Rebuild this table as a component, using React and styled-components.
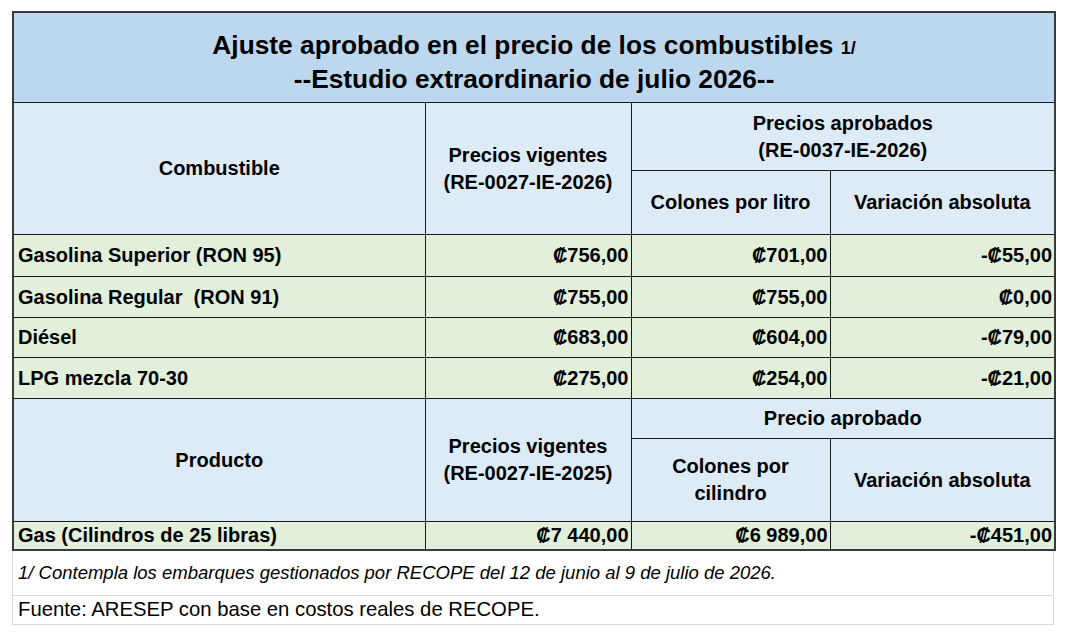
import React from "react";
import styled, { createGlobalStyle } from "styled-components";

const GlobalStyle = createGlobalStyle`
  html, body {
    margin: 0;
    padding: 0;
    background: #ffffff;
  }
  body {
    font-family: "Liberation Sans", Arial, sans-serif;
    color: #000000;
  }
`;

const Page = styled.div`
  padding: 11px 0 0 12px;
  width: 1042px;
`;

const Table = styled.table`
  width: 1042px;
  border-collapse: collapse;
  table-layout: fixed;
  border: 2px solid #3a3a3a;
`;

const TitleCell = styled.td`
  height: 80px;
  padding: 9px 0 0;
  background: #bdd7ee;
  border: 1px solid #1a1a1a;
  text-align: center;
  vertical-align: middle;
  font-size: 26.3px;
  font-weight: bold;
  line-height: 31px;
`;

const Note = styled.span`
  font-size: 18px;
`;

const HeadCell = styled.th`
  height: ${(p) => p.$h}px;
  padding: 0 4px;
  background: #ddebf7;
  border: 1px solid #1a1a1a;
  text-align: center;
  vertical-align: middle;
  font-size: 20px;
  font-weight: bold;
  line-height: 27px;
`;

const DataRow = styled.tr`
  height: ${(p) => p.$h}px;
`;

const LabelCell = styled.td`
  padding: 0 4px;
  background: #e2efda;
  border: 1px solid #1a1a1a;
  text-align: left;
  vertical-align: middle;
  font-size: 20px;
  font-weight: bold;
  white-space: pre;
`;

const NumCell = styled(LabelCell)`
  padding: 0 2px 0 4px;
  text-align: right;
`;

const Notes = styled.div`
  border-left: 1px solid #d9d9d9;
  border-right: 1px solid #d9d9d9;
  width: 1040px;
`;

const NoteRow = styled.div`
  height: ${(p) => p.$h}px;
  display: flex;
  align-items: center;
  padding-left: 5px;
  border-bottom: 1px solid #d9d9d9;
  font-size: ${(p) => (p.$italic ? 18.5 : 20.3)}px;
  font-style: ${(p) => (p.$italic ? "italic" : "normal")};
  box-sizing: border-box;
`;

const fuels = [
  ["Gasolina Superior (RON 95)", "₡756,00", "₡701,00", "-₡55,00", 42],
  ["Gasolina Regular  (RON 91)", "₡755,00", "₡755,00", "₡0,00", 41],
  ["Diésel", "₡683,00", "₡604,00", "-₡79,00", 40],
  ["LPG mezcla 70-30", "₡275,00", "₡254,00", "-₡21,00", 41],
];

export default function App() {
  return (
    <Page>
      <GlobalStyle />
      <Table>
        <colgroup>
          <col style={{ width: 412 }} />
          <col style={{ width: 206 }} />
          <col style={{ width: 199 }} />
          <col style={{ width: 225 }} />
        </colgroup>
        <tbody>
          <tr>
            <TitleCell colSpan={4}>
              Ajuste aprobado en el precio de los combustibles <Note>1/</Note>
              <br />
              --Estudio extraordinario de julio 2026--
            </TitleCell>
          </tr>
          <tr>
            <HeadCell $h={67} rowSpan={2}>Combustible</HeadCell>
            <HeadCell $h={67} rowSpan={2}>
              Precios vigentes
              <br />
              (RE-0027-IE-2026)
            </HeadCell>
            <HeadCell $h={67} colSpan={2}>
              Precios aprobados
              <br />
              (RE-0037-IE-2026)
            </HeadCell>
          </tr>
          <tr>
            <HeadCell $h={63}>Colones por litro</HeadCell>
            <HeadCell $h={63}>Variación absoluta</HeadCell>
          </tr>
          {fuels.map(([name, now, next, diff, h]) => (
            <DataRow key={name} $h={h}>
              <LabelCell>{name}</LabelCell>
              <NumCell>{now}</NumCell>
              <NumCell>{next}</NumCell>
              <NumCell>{diff}</NumCell>
            </DataRow>
          ))}
          <tr>
            <HeadCell $h={39} rowSpan={2}>Producto</HeadCell>
            <HeadCell $h={39} rowSpan={2}>
              Precios vigentes
              <br />
              (RE-0027-IE-2025)
            </HeadCell>
            <HeadCell $h={39} colSpan={2}>Precio aprobado</HeadCell>
          </tr>
          <tr>
            <HeadCell $h={82}>
              Colones por
              <br />
              cilindro
            </HeadCell>
            <HeadCell $h={82}>Variación absoluta</HeadCell>
          </tr>
          <DataRow $h={28}>
            <LabelCell>Gas (Cilindros de 25 libras)</LabelCell>
            <NumCell>₡7 440,00</NumCell>
            <NumCell>₡6 989,00</NumCell>
            <NumCell>-₡451,00</NumCell>
          </DataRow>
        </tbody>
      </Table>
      <Notes>
        <NoteRow $h={45} $italic>
          1/ Contempla los embarques gestionados por RECOPE del 12 de junio al 9 de julio de 2026.
        </NoteRow>
        <NoteRow $h={29}>Fuente: ARESEP con base en costos reales de RECOPE.</NoteRow>
      </Notes>
    </Page>
  );
}
